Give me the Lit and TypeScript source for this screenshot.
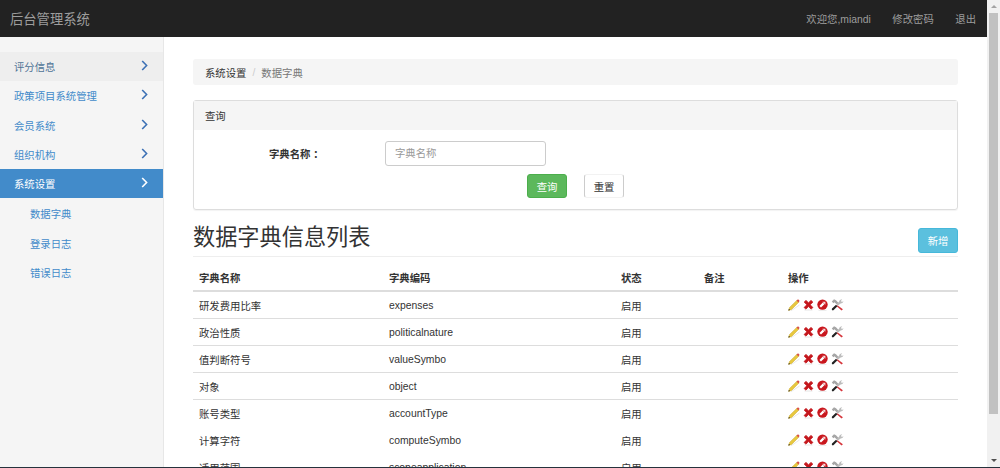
import { LitElement, html, css, svg } from "lit";
import { customElement } from "lit/decorators.js";

const chevron = html`<svg class="chev" viewBox="0 0 7 11" width="7" height="11"><path d="M1.2 1 L5.6 5.5 L1.2 10" fill="none" stroke="currentColor" stroke-width="1.6"/></svg>`;

const pencil = svg`<svg class="ic" style="width:12px" viewBox="0 0 12 12">
  <path d="M3 11.7 L11.5 6" stroke="#e8e8e8" stroke-width="1"/>
  <path d="M0.6 11.4 L1.6 8.4 L9 1.2 L10.9 3.1 L3.6 10.4 Z" fill="#e8c83e" stroke="#c9a62a" stroke-width=".5"/>
  <path d="M8.6 1.6 L9.6 .6 Q10.2 .2 10.8 .8 L11.3 1.4 Q11.7 2 11.2 2.6 L10.3 3.6 Z" fill="#d9534a"/>
  <path d="M0.4 11.6 L.9 9.9 L2.1 11.1 Z" fill="#111"/>
</svg>`;
const cross = svg`<svg class="ic" style="width:11px" viewBox="0 0 11 12">
  <path d="M1.5 11 H9.5" stroke="#e6e6e6" stroke-width="1"/>
  <path d="M1.2 3 L3 1.4 L5.5 3.8 L8 1.4 L9.8 3 L7.2 5.8 L9.9 8.5 L8.1 10.1 L5.5 7.6 L2.9 10.1 L1.1 8.5 L3.8 5.8 Z" fill="#c4161c" stroke="#c4161c" stroke-width=".8" stroke-linejoin="round"/>
</svg>`;
const stop = svg`<svg class="ic" style="width:11px" viewBox="0 0 11 12">
  <path d="M1.5 11.4 H9.5" stroke="#e6e6e6" stroke-width=".8"/>
  <circle cx="5.5" cy="5.6" r="5.2" fill="#c9171e"/>
  <path d="M3.2 7.8 L6.6 4.4" stroke="#fff" stroke-width="2.2"/>
  <path d="M5.4 2.8 L8.4 2.8 L8.4 5.8 Z" fill="#f6dede"/>
</svg>`;
const tools = svg`<svg class="ic" style="width:13px" viewBox="0 0 13 12">
  <path d="M6.4 6.2 L11.9 10.2 L10.6 11.5 L5.4 7 Z" fill="#d5343a"/>
  <path d="M.8 2.4 L3 .3 L5 1.3 L8 4.6 L6.6 6 L3.4 3.2 L2.4 4.2 Z" fill="#a6a6a6"/>
  <path d="M11.2 .3 Q8.3 .2 8 2.8 L5.6 5.2 L7 6.6 L9.6 4.4 Q12.1 4.6 12.5 2 L11 3.1 L9.9 2 Z" fill="#bcbcbc"/>
  <path d="M5 5.8 L1 9.6 Q.5 10.5 1.1 11.1 Q1.9 11.7 2.7 11 L6.4 7.2 Z" fill="#222"/>
</svg>`;

const rows = [
  ["研发费用比率", "expenses"],
  ["政治性质", "politicalnature"],
  ["值判断符号", "valueSymbo"],
  ["对象", "object"],
  ["账号类型", "accountType"],
  ["计算字符", "computeSymbo"],
  ["适用范围", "scopeapplication"],
];

const menu = ["政策项目系统管理", "会员系统", "组织机构"];
const subs = ["数据字典", "登录日志", "错误日志"];

@customElement("app-root")
export class AppRoot extends LitElement {
  static styles = css`
    :host {
      display: flex;
      flex-direction: column;
      height: 468px;
      overflow: hidden;
      font-family: "Liberation Sans", "Noto Sans CJK SC", sans-serif;
      font-size: 10.36px;
      color: #333;
      background: #fff;
    }
    .frame { flex: 1; min-height: 0; display: flex; }
    .bottom { height: 1px; background: #26323c; }
    .page { flex: 1; min-width: 0; display: flex; flex-direction: column; }
    .scroll { width: 13px; background: #f1f1f1; display: flex; flex-direction: column; align-items: center; }
    .arrow { height: 13px; display: flex; align-items: center; justify-content: center; width: 100%; }
    .tri-up { width: 0; height: 0; border: 3px solid transparent; border-top: 0; border-bottom: 3px solid #a3a3a3; }
    .tri-down { width: 0; height: 0; border: 3px solid transparent; border-bottom: 0; border-top: 3px solid #505050; }
    .thumb { width: 9px; height: 401px; background: #c1c1c1; }
    .track { flex: 1; }
    .nav { height: 37px; flex: none; background: #222; display: flex; align-items: center; padding: 0 11px 0 10px; color: #9d9d9d; }
    .brand { font-size: 13.3px; flex: 1; }
    .links { display: flex; gap: 21.5px; }
    .body { flex: 1; min-height: 0; display: flex; }
    .side { width: 163px; flex: none; background: #f5f5f5; border-right: 1px solid #e7e7e7; padding-top: 15px; }
    .item { height: 29.3px; display: flex; align-items: center; justify-content: space-between; padding: 0 15px 0 14px; color: #428bca; }
    .item.hover { background: #eee; color: #4f7396; }
    .item.active { background: #428bca; color: #fff; }
    .chev { color: #3d71b5; margin-top: -2px; }
    .active .chev { color: #fff; }
    .sub { height: 29.8px; display: flex; align-items: center; padding-left: 30px; color: #428bca; }
    .main { flex: 1; min-width: 0; padding: 22px 29px 0; overflow: hidden; }
    .crumb { height: 26px; background: #f5f5f5; border-radius: 3px; padding-left: 12px; display: flex; align-items: center; margin-bottom: 15px; }
    .crumb .sep { color: #ccc; padding: 0 6px; }
    .crumb .cur { color: #777; }
    .panel { height: 110px; box-sizing: border-box; border: 1px solid #ddd; border-radius: 3px; box-shadow: 0 1px 1px rgba(0,0,0,.05); }
    .panel-h { height: 29px; background: #f5f5f5; display: flex; align-items: center; padding-left: 11px; }
    .form { display: flex; align-items: center; padding-top: 11px; }
    .form label { width: 125px; box-sizing: border-box; padding-left: 75px; white-space: nowrap; font-weight: bold; margin-right: 66px; }
    .form input { width: 161px; height: 25px; box-sizing: border-box; border: 1px solid #ccc; border-radius: 3px; padding: 0 9px; font: inherit; outline: none; background: #fff; }
    .form input::placeholder { color: #999; }
    .actions { display: flex; gap: 17px; padding: 8px 0 0 333px; }
    .btn { width: 40px; height: 24px; box-sizing: border-box; border-radius: 3px; border: 1px solid transparent; display: flex; align-items: center; justify-content: center; font: inherit; padding: 0; }
    .ok { background: #5cb85c; border-color: #4cae4c; color: #fff; }
    .reset { background: #fff; border-color: #f2f2f2 #ccc; color: #333; }
    .add { background: #5bc0de; border-color: #46b8da; color: #fff; height: 25px; }
    .head { height: 46px; border-bottom: 1px solid #eee; display: flex; justify-content: space-between; align-items: flex-end; }
    .head h1 { margin: 0 0 6px; font-size: 22.2px; font-weight: normal; line-height: 1.1; color: #333; }
    .head .add { margin-bottom: 3px; }
    table { width: 100%; table-layout: fixed; border-collapse: collapse; margin-top: 7px; }
    th { text-align: left; font-weight: bold; height: 26px; padding: 0 6px; border-bottom: 2px solid #ddd; }
    td { height: 26px; padding: 0 6px; border-bottom: 1px solid #ddd; }
    tr.plain td { border-bottom-color: transparent; }
    .ops { display: flex; gap: 3px; align-items: center; }
    .ic { height: 12px; flex: none; display: block; }
  `;

  render() {
    return html`
      <div class="frame">
        <div class="page">
          <header class="nav">
            <div class="brand">后台管理系统</div>
            <div class="links"><span>欢迎您,miandi</span><span>修改密码</span><span>退出</span></div>
          </header>
          <div class="body">
            <aside class="side">
              <div class="item hover"><span>评分信息</span>${chevron}</div>
              ${menu.map((m) => html`<div class="item"><span>${m}</span>${chevron}</div>`)}
              <div class="item active"><span>系统设置</span>${chevron}</div>
              ${subs.map((s) => html`<div class="sub">${s}</div>`)}
            </aside>
            <main class="main">
              <nav class="crumb"><span>系统设置</span><span class="sep">/</span><span class="cur">数据字典</span></nav>
              <section class="panel">
                <div class="panel-h">查询</div>
                <div class="form"><label>字典名称 ：</label><input placeholder="字典名称" /></div>
                <div class="actions"><button class="btn ok">查询</button><button class="btn reset">重置</button></div>
              </section>
              <div class="head"><h1>数据字典信息列表</h1><button class="btn add">新增</button></div>
              <table>
                <colgroup><col style="width:190px" /><col style="width:232px" /><col style="width:83px" /><col style="width:84px" /><col /></colgroup>
                <thead><tr><th>字典名称</th><th>字典编码</th><th>状态</th><th>备注</th><th>操作</th></tr></thead>
                <tbody>
                  ${rows.map((r, i) => html`<tr class=${i >= 4 ? "plain" : ""}>
                    <td>${r[0]}</td><td>${r[1]}</td><td>启用</td><td></td>
                    <td><div class="ops">${pencil}${cross}${stop}${tools}</div></td>
                  </tr>`)}
                </tbody>
              </table>
            </main>
          </div>
        </div>
        <div class="scroll">
          <div class="arrow"><div class="tri-up"></div></div>
          <div class="thumb"></div>
          <div class="track"></div>
          <div class="arrow"><div class="tri-down"></div></div>
        </div>
      </div>
      <div class="bottom"></div>
    `;
  }
}
